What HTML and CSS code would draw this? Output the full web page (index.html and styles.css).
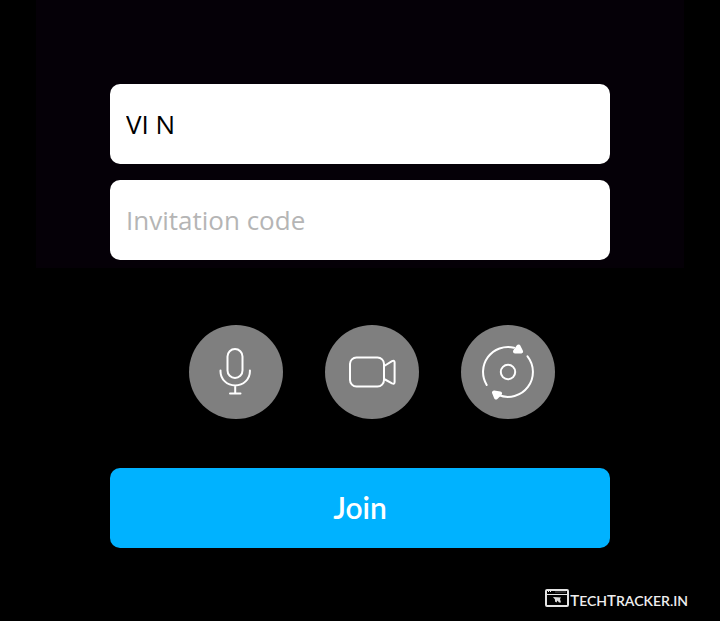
FILE: index.html
```html
<!DOCTYPE html>
<html lang="en">
<head>
<meta charset="utf-8">
<meta name="viewport" content="width=device-width, initial-scale=1">
<title>Join</title>
<link rel="stylesheet" href="styles.css">
</head>
<body>
<form class="join">
  <div class="panel">
    <div class="fields">
      <input class="field" type="text" value="VI N" aria-label="Name">
      <input class="field" type="text" placeholder="Invitation code" aria-label="Invitation code">
    </div>
  </div>
  <div class="controls">
    <button class="round" type="button" aria-label="Microphone">
      <svg viewBox="0 0 94 94">
        <rect x="38.500" y="24" width="15" height="29" rx="7.500"/>
        <path d="M31.500 45.500v1a14.700 14 0 0 0 29.400 0v-1M46.200 60.500v7.500M41 68.500h10.500"/>
      </svg>
    </button>
    <button class="round" type="button" aria-label="Camera">
      <svg viewBox="0 0 94 94">
        <rect x="25" y="32.500" width="34" height="29" rx="6.500"/>
        <path d="M60 40.500l7-4.300q2.600-1.200 2.600 1.300v19.500q0 2.500-2.600 1.300L60 54.500"/>
      </svg>
    </button>
    <button class="round" type="button" aria-label="Switch camera">
      <svg viewBox="0 0 94 94">
        <circle cx="47" cy="47" r="7.200"/>
        <path d="M25.700 60A25 25 0 0 1 53 22.700M66.500 31.300A25 25 0 0 1 37.500 70"/>
        <path class="solid" d="M57.500 21.500L60 26.500L54 26.500ZM33 67.500L39 68.500L35 72.500Z"/>
      </svg>
    </button>
  </div>
  <button class="submit" type="submit">Join</button>
</form>
<footer class="brand">
  <svg class="brand-icon" viewBox="0 0 24 18">
    <path d="M2 1h20q1 0 1 1v14q0 1-1 1h-20q-1 0-1-1v-14q0-1 1-1z"/>
    <path class="dots" d="M1 5.500h22M3 2.500h1M5 2.500h1"/>
    <path class="bar" d="M10 3h11"/>
    <path class="pointer" d="M8 8l8 .5-1 1.500 1 3.500h-2l-1.500-2-1 2-1.500-1 0-2z"/>
  </svg>
  <span class="brand-name"><span class="cap">T</span>ech<span class="cap">T</span>racker.in</span>
</footer>
</body>
</html>
```
FILE: styles.css
```css
* {
  box-sizing: border-box;
}

body {
  margin: 0;
  min-height: 100vh;
  background: #000;
  font-family: "Open Sans", sans-serif;
}

.join {
  display: flex;
  flex-direction: column;
  align-items: center;
}

.panel {
  width: 90%;
  padding: 84px 0 8px;
  background: #050007;
}

.fields {
  display: flex;
  flex-direction: column;
  gap: 16px;
  max-width: 500px;
  margin: 0 auto;
}

.field {
  width: 100%;
  height: 80px;
  padding: 0 16px;
  border: 0;
  border-radius: 10px;
  background: #fff;
  color: #000;
  font: 26px "Open Sans", sans-serif;
}

.field::placeholder {
  color: #b5b5b5;
  opacity: 1;
}

.controls {
  display: flex;
  gap: 42px;
  margin: 57px 0 49px;
  padding-left: 24px;
}

.round {
  width: 94px;
  height: 94px;
  padding: 0;
  border: 0;
  border-radius: 50%;
  background: #7f7f7f;
}

.round svg {
  display: block;
  fill: none;
  stroke: #fff;
  stroke-width: 2;
  stroke-linecap: round;
  stroke-linejoin: round;
}

.round .solid {
  fill: #fff;
  stroke-width: 4;
}

.submit {
  width: 500px;
  max-width: 90%;
  height: 80px;
  padding: 0 0 2px;
  border: 0;
  border-radius: 10px;
  background: #00b2ff;
  color: #fff;
  font: 600 30px Lato, sans-serif;
}

.brand {
  display: flex;
  justify-content: flex-end;
  align-items: flex-start;
  gap: 1px;
  margin-top: 41px;
  padding-right: 32px;
  color: #eee;
}

.brand-icon {
  width: 24px;
  height: 18px;
  fill: none;
  stroke: #e4e4e4;
  stroke-width: 2;
}

.brand-icon .dots {
  stroke-width: 1;
}

.brand-icon .bar {
  stroke: #555;
  stroke-width: 1;
}

.brand-icon .pointer {
  fill: #ddd;
  stroke: none;
}

.brand-name {
  font: 600 14px/22px Lato, sans-serif;
  text-transform: uppercase;
}

.cap {
  font-size: 15px;
}
```
